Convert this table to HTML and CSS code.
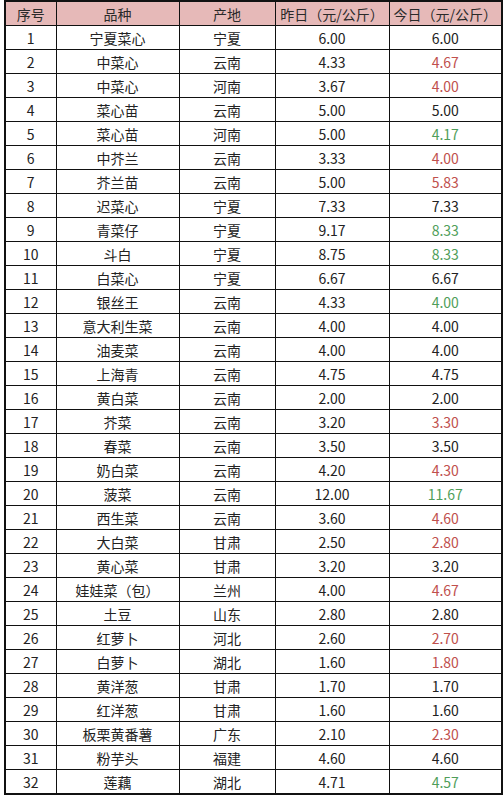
FILE: index.html
```html
<!DOCTYPE html>
<html lang="zh">
<head>
<meta charset="utf-8">
<link rel="stylesheet" href="styles.css">
</head>
<body>
<table class="price">
<colgroup><col class="c1"><col class="c2"><col class="c3"><col class="c4"><col class="c5"></colgroup>
<thead>
<tr><th>序号</th><th>品种</th><th>产地</th><th>昨日（元/公斤）</th><th>今日（元/公斤）</th></tr>
</thead>
<tbody>
<tr><td>1</td><td>宁夏菜心</td><td>宁夏</td><td>6.00</td><td>6.00</td></tr>
<tr><td>2</td><td>中菜心</td><td>云南</td><td>4.33</td><td class="up">4.67</td></tr>
<tr><td>3</td><td>中菜心</td><td>河南</td><td>3.67</td><td class="up">4.00</td></tr>
<tr><td>4</td><td>菜心苗</td><td>云南</td><td>5.00</td><td>5.00</td></tr>
<tr><td>5</td><td>菜心苗</td><td>河南</td><td>5.00</td><td class="down">4.17</td></tr>
<tr><td>6</td><td>中芥兰</td><td>云南</td><td>3.33</td><td class="up">4.00</td></tr>
<tr><td>7</td><td>芥兰苗</td><td>云南</td><td>5.00</td><td class="up">5.83</td></tr>
<tr><td>8</td><td>迟菜心</td><td>宁夏</td><td>7.33</td><td>7.33</td></tr>
<tr><td>9</td><td>青菜仔</td><td>宁夏</td><td>9.17</td><td class="down">8.33</td></tr>
<tr><td>10</td><td>斗白</td><td>宁夏</td><td>8.75</td><td class="down">8.33</td></tr>
<tr><td>11</td><td>白菜心</td><td>宁夏</td><td>6.67</td><td>6.67</td></tr>
<tr><td>12</td><td>银丝王</td><td>云南</td><td>4.33</td><td class="down">4.00</td></tr>
<tr><td>13</td><td>意大利生菜</td><td>云南</td><td>4.00</td><td>4.00</td></tr>
<tr><td>14</td><td>油麦菜</td><td>云南</td><td>4.00</td><td>4.00</td></tr>
<tr><td>15</td><td>上海青</td><td>云南</td><td>4.75</td><td>4.75</td></tr>
<tr><td>16</td><td>黄白菜</td><td>云南</td><td>2.00</td><td>2.00</td></tr>
<tr><td>17</td><td>芥菜</td><td>云南</td><td>3.20</td><td class="up">3.30</td></tr>
<tr><td>18</td><td>春菜</td><td>云南</td><td>3.50</td><td>3.50</td></tr>
<tr><td>19</td><td>奶白菜</td><td>云南</td><td>4.20</td><td class="up">4.30</td></tr>
<tr><td>20</td><td>菠菜</td><td>云南</td><td>12.00</td><td class="down">11.67</td></tr>
<tr><td>21</td><td>西生菜</td><td>云南</td><td>3.60</td><td class="up">4.60</td></tr>
<tr><td>22</td><td>大白菜</td><td>甘肃</td><td>2.50</td><td class="up">2.80</td></tr>
<tr><td>23</td><td>黄心菜</td><td>甘肃</td><td>3.20</td><td>3.20</td></tr>
<tr><td>24</td><td>娃娃菜（包）</td><td>兰州</td><td>4.00</td><td class="up">4.67</td></tr>
<tr><td>25</td><td>土豆</td><td>山东</td><td>2.80</td><td>2.80</td></tr>
<tr><td>26</td><td>红萝卜</td><td>河北</td><td>2.60</td><td class="up">2.70</td></tr>
<tr><td>27</td><td>白萝卜</td><td>湖北</td><td>1.60</td><td class="up">1.80</td></tr>
<tr><td>28</td><td>黄洋葱</td><td>甘肃</td><td>1.70</td><td>1.70</td></tr>
<tr><td>29</td><td>红洋葱</td><td>甘肃</td><td>1.60</td><td>1.60</td></tr>
<tr><td>30</td><td>板栗黄番薯</td><td>广东</td><td>2.10</td><td class="up">2.30</td></tr>
<tr><td>31</td><td>粉芋头</td><td>福建</td><td>4.60</td><td>4.60</td></tr>
<tr><td>32</td><td>莲藕</td><td>湖北</td><td>4.71</td><td class="down">4.57</td></tr>
</tbody>
</table>
</body>
</html>
```
FILE: styles.css
```css
html, body {
  margin: 0;
  padding: 0;
  background: #ffffff;
}
body {
  padding: 0 0 0 4px;
  font-family: "Noto Sans CJK SC", "Microsoft YaHei", sans-serif;
  font-size: 14px;
  color: #222222;
}
.price {
  border-collapse: collapse;
  table-layout: fixed;
  width: 497px;
  border: 2px solid #111111;
}
.c1 { width: 51px; }
.c2 { width: 123px; }
.c3 { width: 96px; }
.c4 { width: 114px; }
.c5 { width: 113px; }
.price th,
.price td {
  border: 1px solid #111111;
  padding: 0;
  text-align: center;
  font-weight: normal;
  height: 23px;
  line-height: 22px;
  white-space: nowrap;
  overflow: hidden;
}
.price th {
  background: #e6b9b8;
  color: #2a2a2a;
  height: 23px;
}
.price td.up { color: #c0504d; }
.price td.down { color: #4f9e5a; }
```
